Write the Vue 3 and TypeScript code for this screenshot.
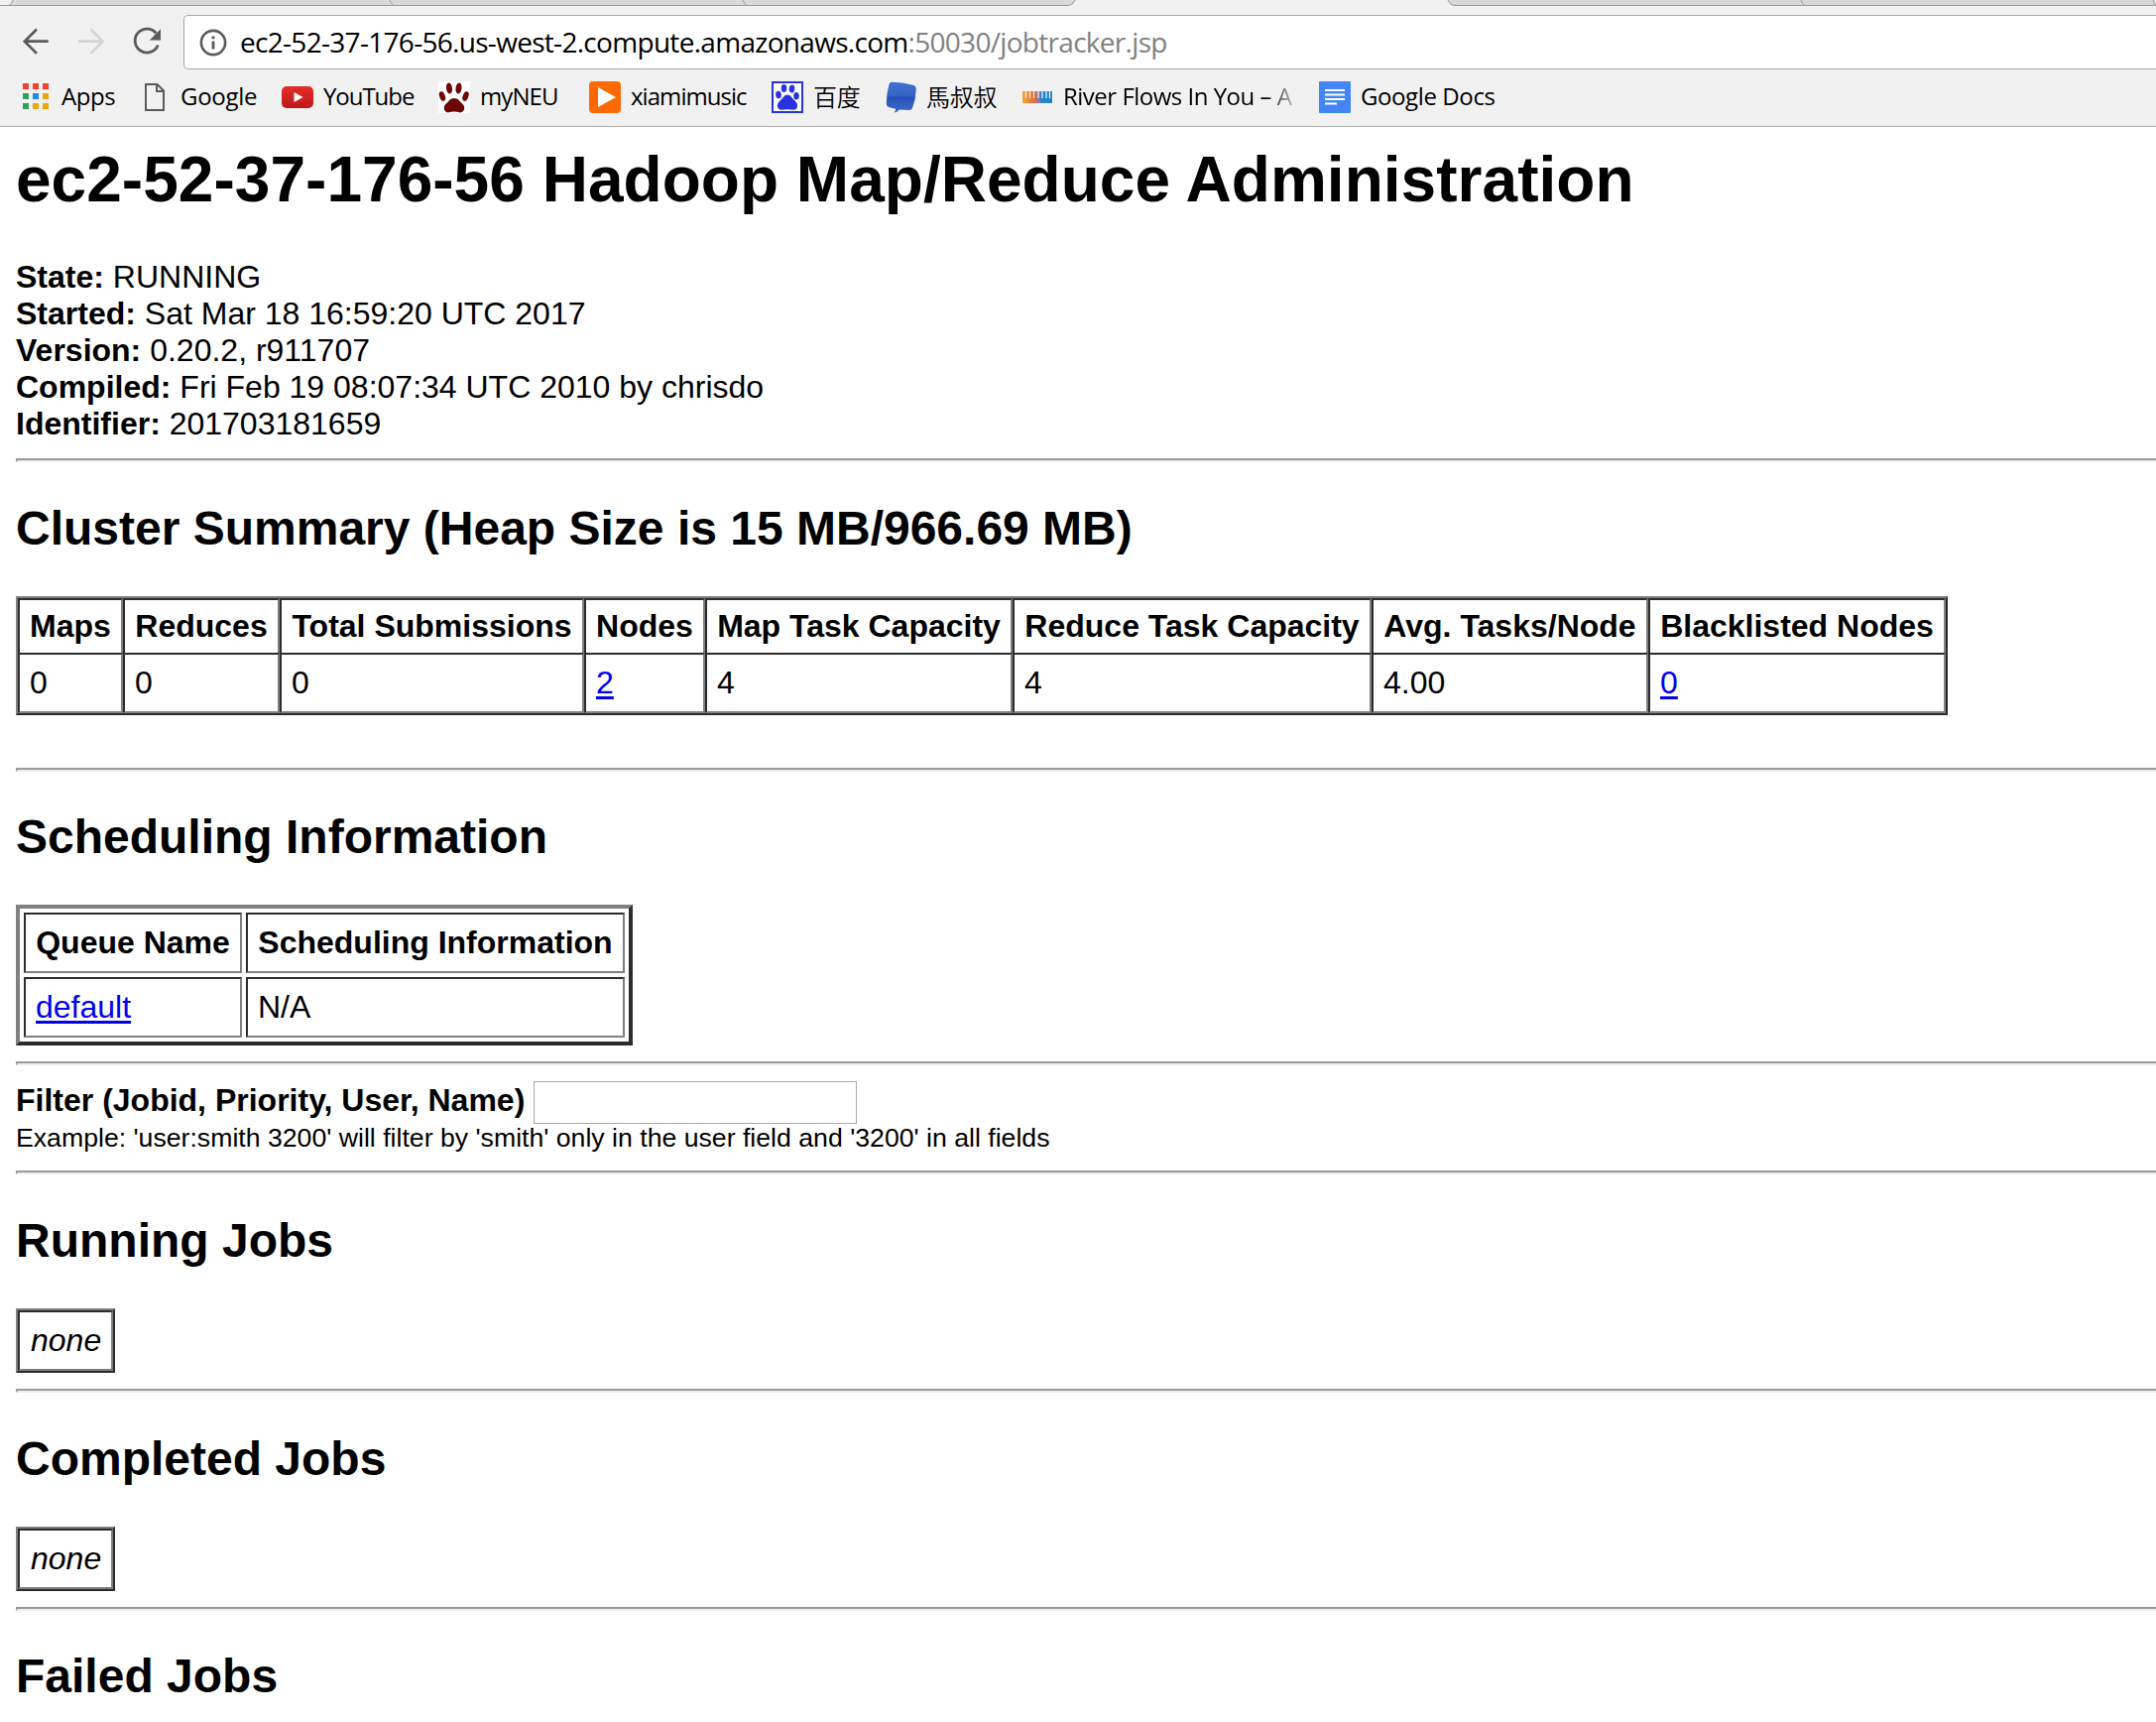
<script setup lang="ts">
interface Summary { label: string; value: string; width: number; link?: boolean }

const details = [
  ['State:', 'RUNNING'],
  ['Started:', 'Sat Mar 18 16:59:20 UTC 2017'],
  ['Version:', '0.20.2, r911707'],
  ['Compiled:', 'Fri Feb 19 08:07:34 UTC 2010 by chrisdo'],
  ['Identifier:', '201703181659'],
]

const summary: Summary[] = [
  { label: 'Maps', value: '0', width: 106 },
  { label: 'Reduces', value: '0', width: 158 },
  { label: 'Total Submissions', value: '0', width: 307 },
  { label: 'Nodes', value: '2', width: 122, link: true },
  { label: 'Map Task Capacity', value: '4', width: 310 },
  { label: 'Reduce Task Capacity', value: '4', width: 362 },
  { label: 'Avg. Tasks/Node', value: '4.00', width: 279 },
  { label: 'Blacklisted Nodes', value: '0', width: 300, link: true },
]

const jobSections = ['Running Jobs', 'Completed Jobs']
const appDots = ['#f6402e', '#f6402e', '#f6402e', '#31a05a', '#2288f5', '#f0a30a', '#31a05a', '#f0a30a', '#f0a30a']
</script>

<template>
  <div class="window">
    <header class="chrome">
      <svg class="tabs" width="2174" height="6" viewBox="0 0 2174 6">
        <rect width="2174" height="6" fill="#f1f1f1" />
        <path d="M13 0Q12 5 8 5.5H1080Q1083 4 1084 0Z" fill="#d9d9d9" />
        <path d="M1460 0Q1462 5 1466 5.5H2174V0Z" fill="#d9d9d9" />
        <path d="M0 5.5H1078Q1082 5 1084 0M1460 0Q1462 5 1466 5.5H2174M13 0Q12 4 9 5.5M393 0Q394 4 397 5.5M749 0Q750 4 753 5.5M1816 0Q1817 4 1820 5.5M2171 0Q2172 4 2174 5.5" fill="none" stroke="#999" />
      </svg>
      <div class="toolbar">
        <svg class="nav" width="185" height="56" viewBox="0 0 185 56" fill="none" stroke-width="2.7">
          <path d="M48.700 27.700H24.500M37 15.500L24.800 27.700L37 39.900" stroke="#5a5a5a" />
          <path d="M79 27.700H103.500M91.500 15.500L103.700 27.700L91.500 39.900" stroke="#d3d3d3" />
          <path d="M157.500 19.500A12 12 0 1 0 159.300 31.500" stroke="#5a5a5a" stroke-width="2.800" />
          <path d="M162 15.300V26.500H150.800Z" fill="#5a5a5a" />
        </svg>
        <div class="omnibox">
          <svg width="28" height="28" viewBox="0 0 28 28">
            <circle cx="14" cy="14" r="12.100" fill="none" stroke="#5a5a5a" stroke-width="2.600" />
            <path d="M12.600 12.500H15.400V20.500H12.600ZM12.600 7.500H15.400V10.200H12.600Z" fill="#5a5a5a" />
          </svg>
          <span class="url">ec2-52-37-176-56.us-west-2.compute.amazonaws.com<span class="path">:50030/jobtracker.jsp</span></span>
        </div>
      </div>
      <nav class="bookmarks">
        <a class="bm">
          <svg class="dots" width="26" height="26" viewBox="0 0 26 26">
            <rect v-for="(c, i) in appDots" :key="i" :x="(i % 3) * 10" :y="Math.floor(i / 3) * 10" width="6" height="6" :fill="c" />
          </svg>
          <span class="apps">Apps</span>
        </a>
        <a class="bm">
          <svg width="32" height="32" viewBox="0 0 32 32" fill="none" stroke="#5a5a5a" stroke-width="2">
            <path d="M8 3H19.500L26 9.500V29H8ZM19 3V10H26" />
          </svg>
          <span class="google">Google</span>
        </a>
        <a class="bm">
          <svg width="32" height="32" viewBox="0 0 32 32">
            <defs><linearGradient id="yt" x1="0" y1="0" x2="0" y2="1"><stop stop-color="#e52d27" /><stop offset="1" stop-color="#bf171d" /></linearGradient></defs>
            <rect y="5" width="32" height="22" rx="5" fill="url(#yt)" />
            <path d="M12.500 11L21.500 16L12.500 21Z" fill="#fff" />
          </svg>
          <span class="youtube">YouTube</span>
        </a>
        <a class="bm">
          <svg width="32" height="32" viewBox="0 0 32 32" fill="#6d0505">
            <rect width="32" height="32" fill="#fff" />
            <ellipse cx="11" cy="7" rx="3" ry="5.500" transform="rotate(-8 11 7)" />
            <ellipse cx="20.500" cy="7" rx="3" ry="5.500" transform="rotate(8 20.500 7)" />
            <ellipse cx="4" cy="15" rx="2.800" ry="5" transform="rotate(-20 4 15)" />
            <ellipse cx="27.500" cy="15" rx="2.800" ry="5" transform="rotate(20 27.500 15)" />
            <path d="M16 17C11.500 17 11 20 8 22.500C4.500 25 5 31 10 31.500Q13 30.500 16 30.500T22 31.500C27 31 27.500 25 24 22.500C21 20 20.500 17 16 17Z" />
          </svg>
          <span class="myneu">myNEU</span>
        </a>
        <a class="bm">
          <svg width="32" height="32" viewBox="0 0 32 32">
            <rect width="32" height="32" rx="4" fill="#ff6a00" />
            <path d="M9 6L27 16L9 26Z" fill="#fff" />
          </svg>
          <span class="xiami">xiamimusic</span>
        </a>
        <a class="bm">
          <svg width="32" height="32" viewBox="0 0 32 32" fill="#2932e1">
            <rect x="1" y="1" width="30" height="30" fill="#fff" stroke="#2932e1" stroke-width="2" />
            <ellipse cx="12.500" cy="7" rx="2.800" ry="4" />
            <ellipse cx="20.500" cy="7.500" rx="2.800" ry="4" transform="rotate(8 20.500 7.500)" />
            <ellipse cx="7" cy="13.500" rx="2.800" ry="3.800" transform="rotate(-8 7 13.500)" />
            <ellipse cx="25" cy="14.800" rx="2.800" ry="3.800" />
            <path d="M16 13.500C12.500 13.500 11.500 17 9 19C5 22 4.500 28.500 10 28.800Q13 28.200 16 28.200T22 28.800C27 28.500 27.500 22.500 23 19C20.500 17 19.500 13.500 16 13.500Z" />
          </svg>
          <span class="cjk baidu">百度</span>
        </a>
        <a class="bm">
          <svg width="32" height="32" viewBox="0 0 32 32">
            <defs><linearGradient id="bub" x1="0" y1="0" x2="0" y2="1"><stop stop-color="#4471cf" /><stop offset=".45" stop-color="#3463c6" /><stop offset=".5" stop-color="#2451b8" /><stop offset="1" stop-color="#3f6cca" /></linearGradient></defs>
            <path d="M6 .8Q17 .8 28.500 4Q31 5 30.800 8Q30.500 18 27 27Q26.500 29 24 29L14 28.500Q12 31 8.500 31.500Q10.500 29.500 10 27.800L3 26Q1 25.200 .8 23Q.8 12 3.500 3Q4 1 6 .8Z" fill="url(#bub)" />
          </svg>
          <span class="cjk ma">馬叔叔</span>
        </a>
        <a class="bm">
          <svg width="32" height="32" viewBox="0 0 32 32">
            <defs><linearGradient id="keys"><stop stop-color="#f2a93b" /><stop offset=".42" stop-color="#e9663c" /><stop offset=".55" stop-color="#7b7eae" /><stop offset=".65" stop-color="#2287c9" /><stop offset="1" stop-color="#2287c9" /></linearGradient></defs>
            <rect x="1" y="10" width="30" height="12" fill="url(#keys)" />
            <path d="M4.500 10V17M8.500 10V17M12.500 10V17M17 10V17M21 10V17M25 10V17M28.500 10V17" stroke="#f4f1ed" stroke-width="1.200" />
          </svg>
          <span class="river">River Flows In You – A</span>
        </a>
        <a class="bm">
          <svg width="32" height="32" viewBox="0 0 32 32">
            <rect width="32" height="32" rx="1" fill="#4285f4" />
            <path d="M6 10H26M6 14.500H26M6 19H26M6 23.500H18" stroke="#fff" stroke-width="2" transform="translate(0 -1)" />
          </svg>
          <span class="docs">Google Docs</span>
        </a>
      </nav>
    </header>

    <main class="page">
      <h1>ec2-52-37-176-56 Hadoop Map/Reduce Administration</h1>
      <div v-for="[k, v] in details" :key="k"><b>{{ k }}</b> {{ v }}</div>
      <hr />
      <h2>Cluster Summary (Heap Size is 15 MB/966.69 MB)</h2>
      <table class="grid summary">
        <colgroup><col v-for="s in summary" :key="s.label" :style="{ width: s.width + 'px' }" /></colgroup>
        <tbody>
          <tr><th v-for="s in summary" :key="s.label">{{ s.label }}</th></tr>
          <tr>
            <td v-for="s in summary" :key="s.label">
              <a v-if="s.link" href="#">{{ s.value }}</a><template v-else>{{ s.value }}</template>
            </td>
          </tr>
        </tbody>
      </table>
      <br />
      <hr />
      <h2>Scheduling Information</h2>
      <table class="grid queues">
        <tbody>
          <tr><th>Queue Name</th><th>Scheduling Information</th></tr>
          <tr><td><a href="#">default</a></td><td>N/A</td></tr>
        </tbody>
      </table>
      <hr />
      <div class="filter"><b>Filter (Jobid, Priority, User, Name)</b><input type="text" /></div>
      <div class="example">Example: 'user:smith 3200' will filter by 'smith' only in the user field and '3200' in all fields</div>
      <hr />
      <template v-for="name in jobSections" :key="name">
        <h2>{{ name }}</h2>
        <table class="grid none"><tbody><tr><td><i>none</i></td></tr></tbody></table>
        <hr />
      </template>
      <h2>Failed Jobs</h2>
    </main>
  </div>
</template>

<style>
body { margin: 0; background: #fff; }
</style>

<style scoped>
.window { width: 2174px; height: 1736px; overflow: hidden; background: #fff; }
.chrome {
  box-sizing: border-box;
  height: 128px;
  background: #f1f1f1;
  border-bottom: 1px solid #b0b0b0;
  font-family: "Open Sans", "Noto Sans", sans-serif;
  color: #000;
}
.tabs { display: block; }
.toolbar { display: flex; height: 63px; }
.nav { flex: none; margin-top: 8px; }
.omnibox {
  flex: 1;
  display: flex;
  align-items: center;
  box-sizing: border-box;
  height: 55px;
  margin-top: 9px;
  padding-left: 15px;
  background: #fff;
  border: 1px solid #a6a6a6;
  border-right: 0;
  border-radius: 5px 0 0 5px;
}
.url { margin: 0 0 2px 13px; font-size: 28px; line-height: 50px; white-space: nowrap; letter-spacing: -0.7px; }
.path { color: #808080; }
.bookmarks { display: flex; height: 58px; padding-left: 23px; align-items: center; }
.bm { display: flex; align-items: center; height: 58px; flex: none; color: #000; }
.bm svg { flex: none; }
.bm .dots { margin-bottom: 2px; }
.bm span { font-size: 24px; line-height: 36px; margin-bottom: 2px; white-space: nowrap; box-sizing: border-box; padding-left: 10px; letter-spacing: -0.4px; }
.bm .apps { width: 90px; padding-left: 13px; }
.bm .google { width: 113px; padding-left: 11px; letter-spacing: -0.3px; }
.bm .youtube { width: 126px; letter-spacing: -1.05px; }
.bm .myneu { width: 120px; letter-spacing: -0.9px; }
.bm .xiami { width: 152px; letter-spacing: -0.95px; }
.bm .cjk { font-family: "Noto Sans CJK TC", sans-serif; font-weight: 350; letter-spacing: -0.3px; }
.bm .baidu { width: 83px; }
.bm .ma { width: 105px; padding-left: 9px; }
.bm .river { width: 268px; letter-spacing: -0.5px; -webkit-mask-image: linear-gradient(90deg, #000 215px, transparent 250px); mask-image: linear-gradient(90deg, #000 215px, transparent 250px); }
.bm .docs { width: 160px; }

.page { padding: 16px 0 0 16px; font: 32px/37px "Liberation Sans", Arial, sans-serif; color: #000; }
h1 { margin: 0 0 42px; font-size: 64px; line-height: 75px; letter-spacing: 0.03px; }
h2 { margin: 39.84px 0; padding-bottom: 2px; font-size: 48px; line-height: 53px; }
hr { margin: 16px 0; height: 0; border: 2px solid; border-color: #9a9a9a #eee #eee #9a9a9a; border-right: 0; }
.page a { color: #00e; text-decoration: underline; text-decoration-thickness: 3px; text-underline-offset: 3px; }
.grid { border: 2px solid; border-color: #808080 #2c2c2c #2c2c2c #808080; border-spacing: 0; }
.grid th, .grid td { box-sizing: border-box; border: 2px solid; border-color: #2c2c2c #808080 #808080 #2c2c2c; padding: 10px; text-align: left; white-space: nowrap; }
.grid th { text-align: center; }
.summary { table-layout: fixed; width: 1948px; }
.summary th { border-bottom: 0; padding: 8px 9px; }
.queues { border-width: 4px; border-spacing: 4px; }
.queues th:first-child { width: 220px; }
.queues th:last-child { width: 382px; }
.grid.none td { width: 96px; padding-left: 11px; padding-right: 9px; }
.filter { display: flex; align-items: flex-start; height: 39px; }
.filter b { line-height: 39px; }
.filter input { box-sizing: border-box; width: 326px; height: 43px; margin: 0 0 0 9px; padding: 2px; border: 1px solid #a9a9a9; background: #fff; }
.example { height: 35px; font-size: 26.67px; line-height: 37px; }
</style>
